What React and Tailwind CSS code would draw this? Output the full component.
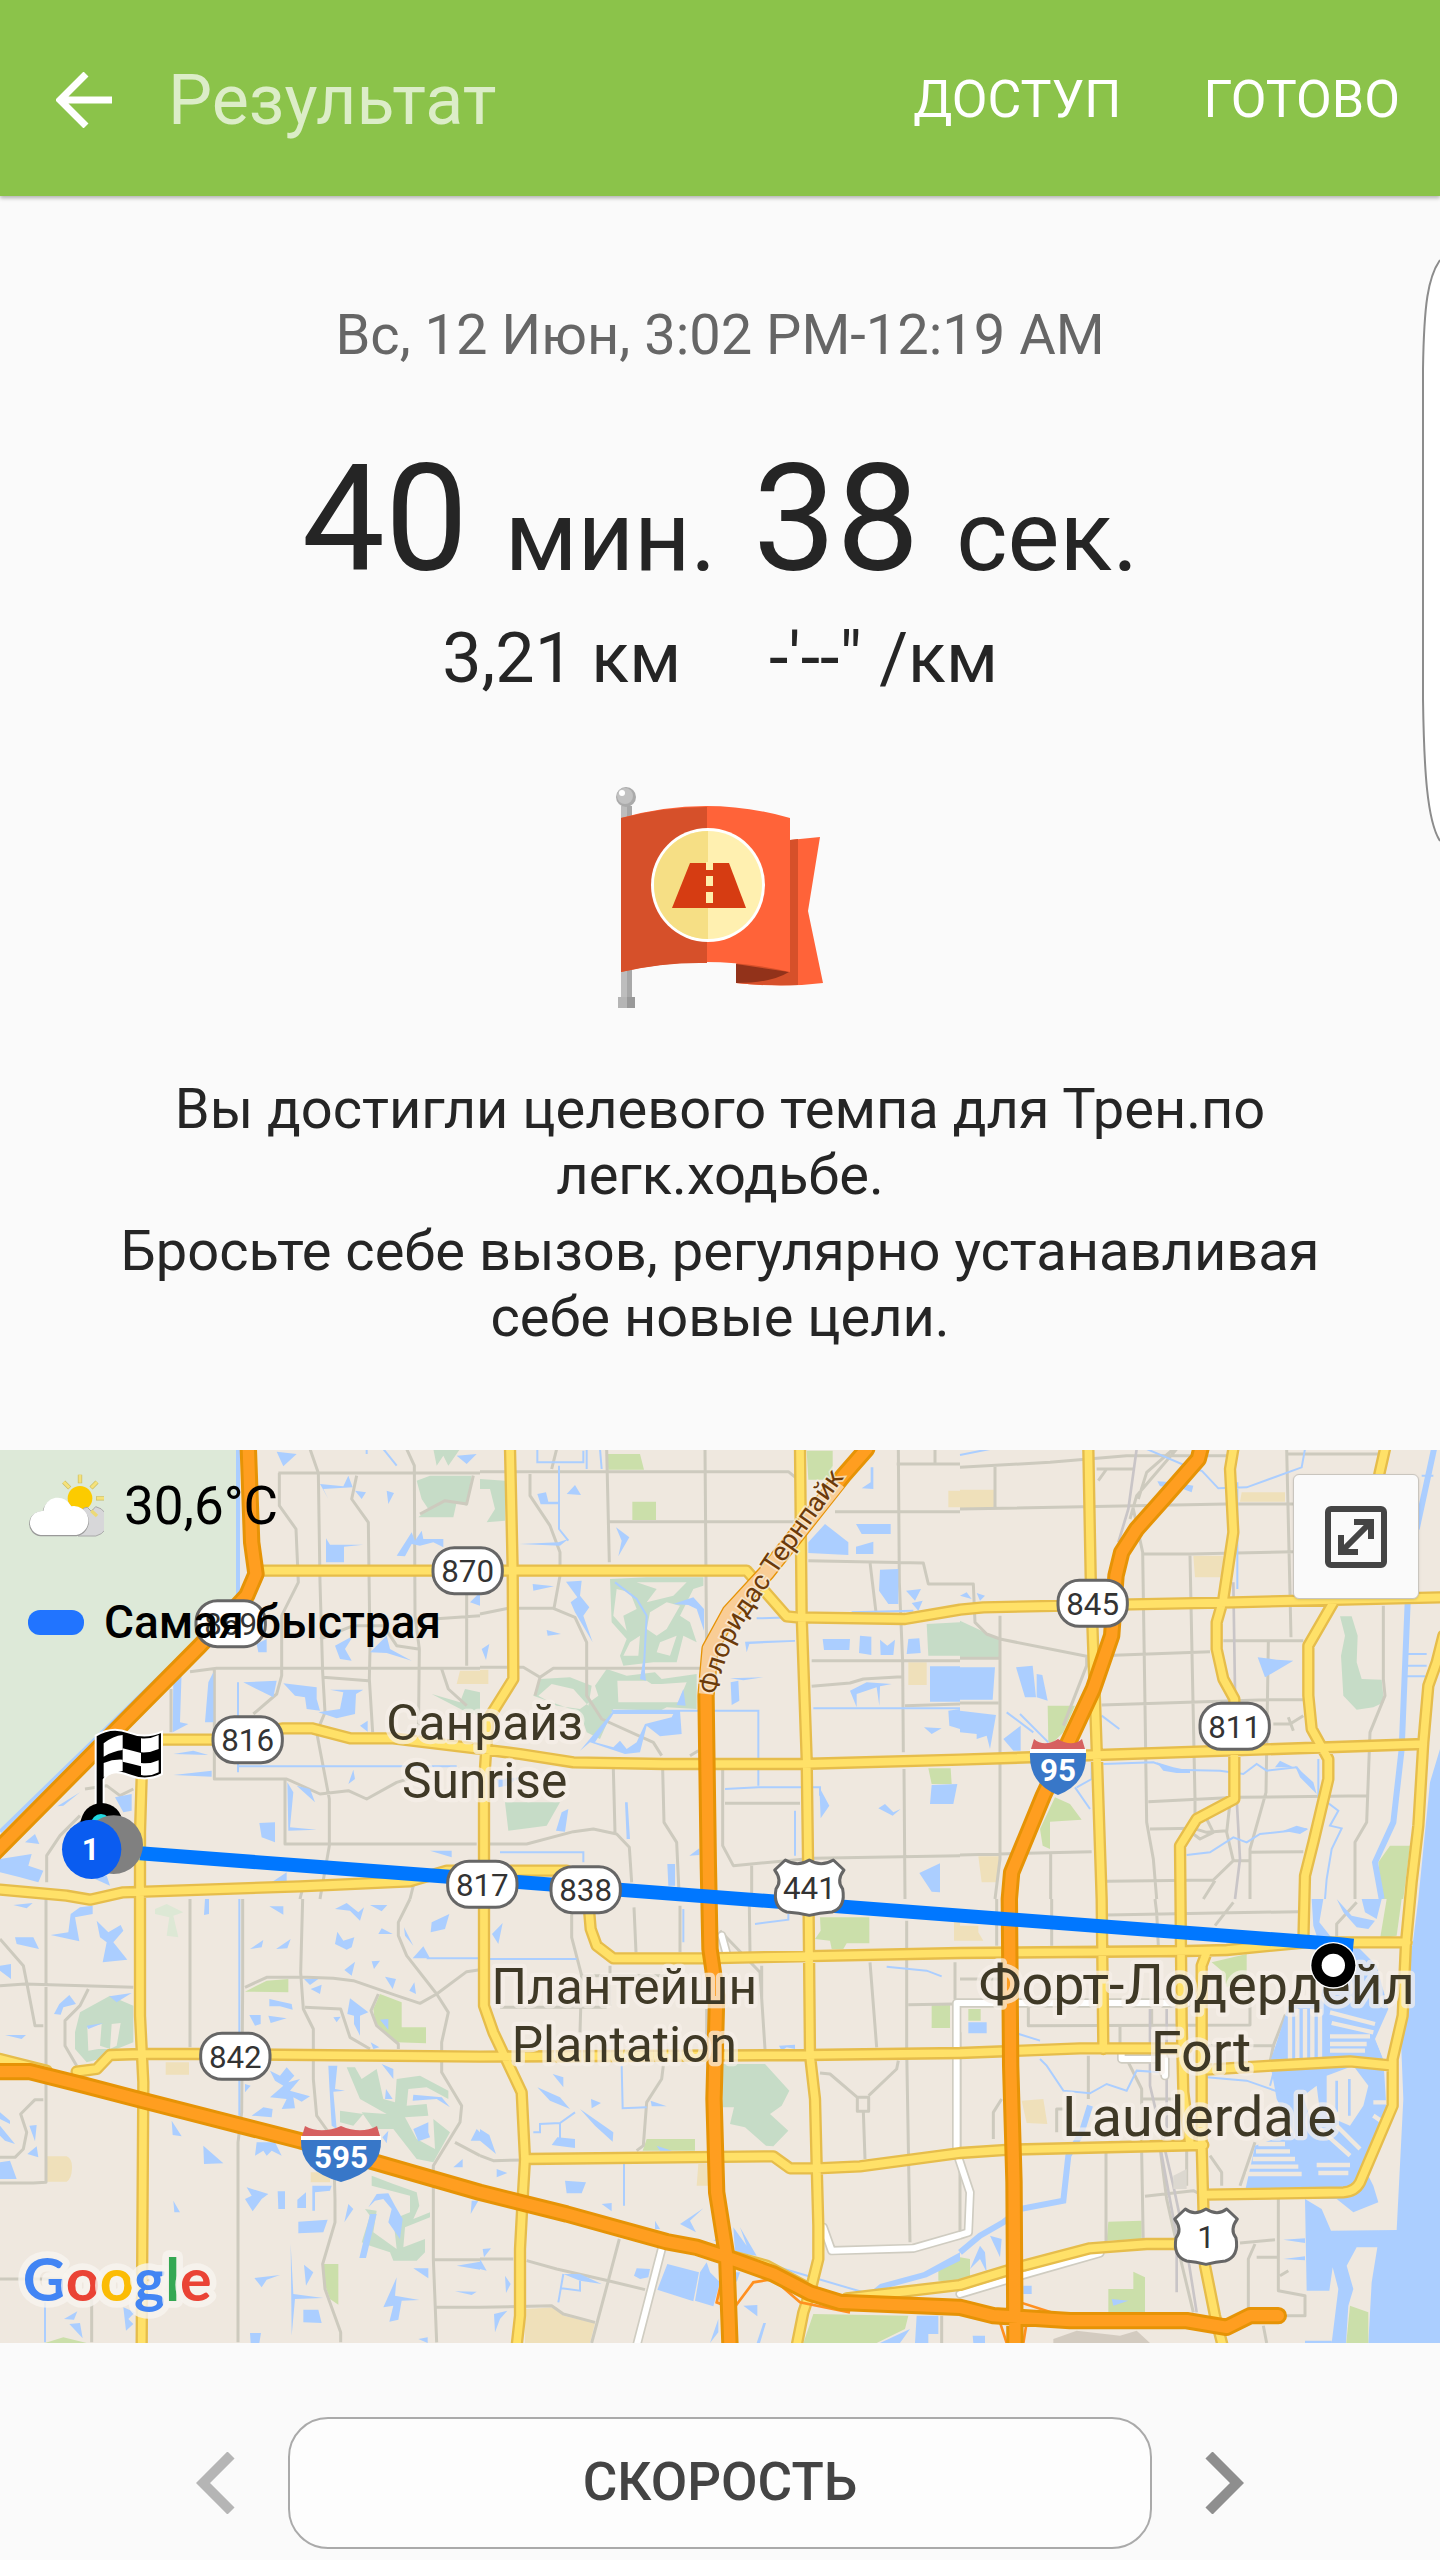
import React from 'react';

// Map drawing units: 4320 x 2679, cut in tiles of 1440 x 1350
const tiles = [
    {
        x: 0,
        y: 0,
        golf: 'M1250 95L1290 80H1415L1400 170L1370 160L1360 205H1255L1285 180L1265 150ZM1300 0H1380L1345 50L1330 20L1310 50ZM1295 735L1380 760L1395 720L1440 730V800L1400 790Z',
        sand: 'M1380 665H1440V705H1370Z',
        water: 'M830 8L890 15L850 52ZM960 105L1030 112L1045 80L1058 115L970 120L985 150ZM1065 125L1098 130L1085 150ZM1160 125L1182 132L1165 165ZM978 268L990 287L1090 287L1032 293V340H978ZM1190 320L1235 250L1245 275L1265 245L1270 270H1330V295L1300 280L1260 290L1235 285L1215 322ZM1370 20L1430 15L1400 45ZM520 690L545 665L540 820L565 825L518 850ZM615 820L625 700L640 670V820ZM730 700L830 695L820 745ZM850 703L950 715V750L960 785L920 780L915 745L885 740ZM955 790L1020 780L1030 730L990 722H1090L1068 735L1065 795L1010 808ZM1080 830L1103 815V848ZM520 915L580 905L625 918ZM520 978L635 965V983ZM172 1072L240 1030L190 1070ZM345 1045L395 1035V1085L370 1090ZM75 1180L105 1155L118 1185ZM0 1230L95 1215L85 1250L130 1265L115 1300L60 1285L0 1270ZM778 1122L825 1120V1180L785 1165ZM862 1000L880 1030L870 1135L950 1142L865 1145ZM890 1010L930 1020L945 1060ZM1045 1005L1060 962L1065 990ZM1005 590L1060 560L1035 600L1055 635L1020 630ZM1110 610L1160 560L1170 600L1235 635L1160 612ZM770 585L800 570V610H775ZM1290 1205H1355V1225ZM285 1290L320 1280L330 1310ZM815 1300L860 1270V1300ZM1410 460L1440 430V470Z',
        canal: 'M714 952H1370M714 700V970M1100 0V15M1150 0L1190 50',
        street: 'M835 72H1440M838 72V170L888 240L895 400L845 500V680L830 735L760 795M930 0L955 72L960 400L968 670L975 790L950 850L988 1050V1190L960 1350M1070 80L1055 150L1105 220L1110 600L1108 690L1118 850M1220 0L1243 50L1245 500L1258 600L1255 880M1400 380V650M570 668L650 658H1440M513 720V850M643 658V990H860L960 1035L1045 1025L1100 1050L1190 1000L1240 985M855 990V1185H1430M970 685L1105 695M1325 660L1345 720L1400 770M960 570L1060 530H1150L1190 590L1255 600M1260 195L1335 155L1400 165L1420 80M140 1300V1220L180 1160L240 1100M1245 1290L1230 1350M910 1310L900 1350M255 1020L320 1010L360 1040L400 1020M1300 510L1440 500',
    },
    {
        x: 1440,
        y: 0,
        golf: 'M0 90L75 95V215L20 220L45 180L30 120H0ZM390 390L500 385H670V410L640 420L600 500L630 520L650 580L610 560L590 640H520L430 650L420 620L440 570L395 520ZM410 420L400 500L440 545L430 500L470 480L450 430ZM470 400L530 420L500 460L580 440L620 400ZM510 490L560 460L600 470L560 540L530 560L500 540ZM450 580L480 560L475 620L430 620ZM540 580L590 560L570 620L530 610ZM160 740L180 690L270 685L335 710L325 770L280 720L215 705L175 740L230 770L300 780L355 740L345 710L380 660L440 680L525 670L545 690L650 675V780L560 775L540 785L400 780L360 870L320 850L300 790ZM412 695H500L515 705L545 705L620 700L595 760L415 760ZM75 1060H240L200 1130L85 1145ZM1340 525L1440 520V620H1345Z',
        green: 'M380 15H480L492 62H385ZM457 158H528V213H457ZM980 5H1058V92H985ZM1345 958H1412L1415 1005H1355Z',
        sand: 'M1285 640H1340V708H1285ZM1405 125H1440V175H1405ZM0 662H25V705H0Z',
        water: 'M172 135L198 130L205 158H238V166H182ZM260 135L285 108L303 138ZM408 235L448 265L415 322L425 275ZM118 285L235 280L265 270L240 290ZM158 405L222 412L160 425ZM200 543L243 555L203 560ZM258 398L305 395L300 440L328 475L310 500L338 580L285 490L272 460L292 445ZM5 600L28 585L18 633ZM580 465L640 445L672 480V545L650 480L625 468ZM985 280L1035 225L1105 280V318L985 312ZM1128 225H1232V255H1145ZM1128 293L1180 278V315H1128ZM1145 118L1172 100V55H1180V120ZM1200 362L1255 360V465H1225L1197 425ZM1278 425L1323 420L1305 455ZM1295 462L1328 455L1315 485ZM1028 570H1110L1108 603H1032ZM1140 560L1174 563V618L1137 612ZM1200 572L1222 590L1245 572L1240 618H1202ZM1285 570L1318 568L1322 612L1280 615ZM1350 652H1440V758H1350ZM1110 725L1160 700L1235 705L1200 712L1198 770L1190 715L1130 735V775ZM1405 785L1440 780V840L1408 830ZM1332 835L1385 838L1355 855ZM750 688L850 685L790 694ZM752 700L775 695L778 755L755 768ZM300 905L400 785H600L605 855L540 862L500 830L480 910L435 915L330 880ZM345 880L400 795H580L575 805L495 825L470 880L440 900L420 875L400 895ZM590 768L610 720L617 770ZM50 990L120 985L80 1010L55 1015ZM228 1145L245 1090L265 1080L255 1148ZM1355 1008L1432 1005L1420 1065H1350ZM1018 1015L1048 1070L1022 1108ZM1195 1078L1215 1065L1240 1090L1262 1080L1238 1100ZM1318 1272L1380 1243V1330L1355 1328ZM562 1245H585V1310H565ZM628 1220L658 1198V1218ZM435 1060H443L450 1170H440ZM795 578L945 573V578L808 585L800 610ZM480 690L490 630L498 695Z',
        canal: 'M172 0V40H310V5M237 50V240L265 275M320 0V60M360 0L365 60M395 785H835V1010M735 1020L835 1015H1020V1040M1000 778H1440M945 1085V1220M60 1210L310 1210V1240M405 400L470 450L500 500L490 690M1115 490L1300 485M830 508L940 505',
        street: 'M0 68H925L950 88M380 0L388 340M388 218H950M675 0L680 640M150 75V140L210 230L240 310V380L222 478M0 495L85 478H220L285 505L320 580V740L365 810L520 880L545 920M0 655H130L180 685L220 658H680M180 685L165 740M1255 0L1258 400L1268 640L1270 910M1250 45H1440M1365 0V45M1065 188H1440M985 335L1330 342L1345 405H1440M1170 340L1188 490M995 635H1440M995 712L1110 702L1150 690L1265 683M1275 770L1440 765M400 960L405 1150M548 960L552 1120L590 1180L598 1350M30 1185H140L280 1148L340 1140L410 1155L448 1195L455 1300M728 960V1190L760 1250L920 1235L1000 1228L1440 1220M735 1063H960M1272 960L1275 1350M815 1250V1350M630 920L655 905M230 0L215 60',
    },
    {
        x: 2880,
        y: 0,
        golf: 'M0 515L118 570V628H0ZM1140 502H1175L1193 560L1190 640L1205 690L1265 692L1272 760L1240 775L1190 782L1150 740L1143 620L1155 560Z',
        green: 'M263 770H345L310 850L280 880H265ZM285 1045L330 1065L365 1112L270 1118V1200L248 1190L240 1140ZM1290 1190H1350L1330 1350H1265L1255 1240Z',
        sand: 'M0 122H103V178H0ZM845 130H975V158H840ZM700 320H790V385H705ZM55 1222H118L112 1300H65Z',
        water: 'M0 655H105L98 752H0ZM168 655L218 650L228 745H195ZM230 675L247 678L263 755L230 745ZM0 785L108 798L90 900L80 860L50 870V855L0 850ZM130 870L182 830V905H160ZM893 625L950 632L1000 635L915 685ZM592 97L640 100L700 110L695 130L655 115L600 112ZM590 940L640 955L690 965V972H650L610 965ZM1005 950L1060 1000L1070 1035L1020 985ZM945 955L960 935L1000 955ZM970 1145L1010 1130L1045 1140L1020 1155ZM0 440L20 430L35 450ZM50 432L75 440L60 455ZM1440 900L1410 1000L1375 1350H1440Z',
        canal: 'M430 945L580 940L640 962L780 965L850 975L890 945L920 965L1010 955L1060 1020M1075 930V1040L1135 1085L1110 1130L1145 1138L1115 1200L1100 1290L1095 1350M680 1218L750 1210L820 1165L860 1180L900 1155L1040 1140M725 65L775 118L860 115L1025 55L1035 0M560 0L700 60L725 65M0 18L90 0M345 1015L390 1080M180 795L265 880M140 790L220 850M425 800L478 840M350 1015L395 990V940M832 100V420M1340 615H1400M1340 650H1400M1340 682H1395M1385 80H1420',
        river: 'M1343 460L1325 900L1300 1120L1245 1240L1265 1350M1422 0L1370 240',
        street: 'M0 55L270 40L500 20H800M105 45V180M0 180L800 165H1000M650 0L530 140L510 210M640 0L560 70L535 150M520 180L548 310L555 770L560 1120L580 1230L590 1350M550 315H690L1000 308M690 320L705 1050V1140M980 0L993 565M790 575H1030M120 570L380 622L750 608M120 500V1230L105 1350M0 405H40L45 520L80 555L120 570M0 628H120M0 762H115M380 622V650L310 830M425 768L920 752H1030M925 580L918 1030L870 1200V1350M565 1058L830 1045L1225 1040M1270 470V690L1275 740L1230 850L1220 1120L1185 1180V1350M570 1140L700 1138L740 1150L800 1145M740 1110L760 1150L720 1170L700 1155M0 1218L395 1208M272 1215V1350M440 1297L760 1293L820 1235H870M870 1210L1030 1208M820 1235L800 1150L810 1060M730 1350L765 1295M940 825H990L1030 800M985 805L1000 845M980 15H1280M410 60H520M440 60L415 95',
        rail: 'M530 0L505 180L475 280M820 400L830 1050L840 1230L825 1350',
    },
    {
        x: 0,
        y: 1350,
        golf: 'M225 400L240 340L330 290L400 320V430L350 450L300 480L260 490L225 450ZM262 385L305 375L300 440L330 450L335 375L362 372L350 440L330 450L295 450L265 455ZM1040 505H1065L1085 540L1130 510L1150 600L1185 610L1190 540L1260 530L1345 575V600L1280 565L1225 570L1220 620L1280 615L1285 650L1215 655L1250 720L1305 750L1300 660L1350 700L1300 790L1250 780L1180 690L1120 690L1085 640L1160 645L1080 600ZM1020 635L1090 645L1060 680L1020 670ZM1115 830L1180 855L1250 880L1258 920L1240 960L1290 940V955L1215 985L1210 1045L1275 1020V1060L1250 1085H1180L1170 1060L1110 1040L1085 1030L1110 950L1095 930L1130 935L1120 1000L1190 1050L1180 960L1230 940V890L1115 860Z',
        green: 'M735 278L800 245L865 240V280ZM1140 285L1205 310V385H1278V433L1190 430L1125 370L1120 330ZM970 1095H1015V1217L990 1200L972 1150ZM135 1332L190 1315L260 1332Z',
        sand: 'M497 490H567V527H497ZM140 772H200Q218 780 216 810T200 848H140ZM932 820H990V850H932Z',
        water: 'M40 18L98 12L80 28ZM212 45L240 25L278 20V45L225 55L238 127L152 108L205 100ZM290 65L325 100L362 78L370 95L340 130L382 182L308 190L320 130L300 115ZM45 115H100L117 150L50 135ZM615 0H627V45L612 48ZM808 22H850V47ZM750 150L790 123L785 145ZM828 150L872 120L862 148ZM1005 30L1040 12L1075 40L1092 25L1080 65L1050 35ZM1110 18H1162L1145 37ZM1012 98L1030 125L1063 115L1055 145L1040 152L1005 135ZM1135 105L1145 88L1178 105ZM1212 85L1240 140L1215 110ZM1295 70L1348 45L1335 90L1292 100ZM1238 178L1270 142L1290 178ZM1033 213L1065 188L1055 230ZM1115 187L1140 185L1122 210ZM1155 233L1188 240L1178 270ZM1228 275L1243 250L1248 285ZM932 270L965 257L960 285ZM912 240H955L930 258ZM0 200L33 195V240L0 215ZM162 345L178 315L208 288L228 315L190 325L182 347ZM808 300L875 315L878 332L840 322H808ZM748 348H782V375L765 380ZM805 350L860 358L812 372ZM1050 298L1105 340L1080 350V410L1062 375V350L1042 345ZM1000 355L1022 353L1010 370ZM1140 362L1165 360V393ZM15 408L78 408L65 420ZM1112 430L1138 445L1120 450ZM328 292L395 282L350 310ZM260 380L310 372L265 390ZM810 515L840 530L860 505L883 530L865 550L900 540L870 575L930 592L905 608L880 595L885 628L845 630L860 600L810 595L850 560L825 545ZM985 500H1012L1005 570L1035 575L1000 578L1010 690L995 680L988 560ZM1145 495L1180 510V540ZM1158 570L1178 600L1155 600ZM1240 587L1325 595L1350 625L1310 600L1238 605ZM1240 690L1285 670V700L1290 715L1255 727ZM1412 725L1430 690L1440 700V725ZM1360 805L1388 780V805ZM1147 715L1165 695L1160 733ZM0 640L30 665V675L0 660ZM0 680L45 735L15 725L0 710ZM88 680L110 678L105 727ZM82 765L110 742L115 775ZM0 790L30 785L50 840H0ZM515 665L545 712L518 708ZM610 740L670 793L612 795ZM765 770L770 730H825L845 770L815 755L800 770L790 755ZM755 650L790 625L818 630L815 655ZM735 555L752 560L735 580ZM740 865L805 885L785 900L758 937L735 900L755 890ZM833 877H855V930H835ZM892 902L918 880V927H892ZM937 860H995L990 875L945 880V935H937ZM895 968L983 962L970 1000L895 1003ZM1033 970L1045 915L1060 930ZM1105 925L1130 885L1165 883L1185 920L1208 960L1200 1020L1165 970L1175 930L1150 900L1125 905ZM1110 945H1130L1098 1077H1078ZM520 905L540 940H523ZM763 1137L840 1128L800 1142L785 1165ZM872 1035L880 1185L970 1197L885 1200L875 1310ZM912 1097L940 1120L918 1160ZM910 1232H955L965 1272L910 1270ZM750 1302H783L778 1332H752ZM1150 1225L1190 1135L1185 1190L1258 1203L1205 1205L1195 1262L1168 1268L1180 1220ZM1240 1108H1285V1138ZM1370 1100L1440 1088V1112ZM1365 1177L1430 1178L1415 1188ZM192 1260L232 1237L222 1262ZM208 1275L240 1272L248 1318ZM370 1225L405 1240L385 1260L400 1275L378 1295ZM1412 945L1415 905L1435 905ZM1255 1320L1283 1315V1332Z',
        canal: 'M718 0V650M1280 178H1440M135 1210V1330',
        street: 'M138 0V850L100 852H0M0 120L70 200L80 250L105 380H130M0 260L75 255L400 265M265 270L240 320L195 365V440L230 500M130 602H105L62 645L80 700L70 750L45 775H0M570 0V445M728 0V270L725 640L714 730V1330M908 0L902 220L910 330L940 390V540L950 650L1000 720L1005 900V970L968 1095L975 1170L1022 1300V1330M735 265L800 235H920L1000 238L1060 245L1190 290L1260 313L1310 285L1400 218L1440 212M1230 0L1195 70V110L1220 170L1310 285L1345 340L1325 430V520L1385 620L1380 670L1300 800V1080L1310 1330M1300 1082H1440M1310 1225H1440M915 325L1022 330L1050 415L1110 450M1135 285L1113 335L1130 380L1195 435V450M1365 730L1440 770M0 1140H220M275 1200V1330',
    },
    {
        x: 1440,
        y: 1350,
        golf: 'M728 495H855L928 575L905 620L870 645L925 695L880 742L858 740L795 685L750 675L762 625H728Z',
        green: 'M1020 55H1168V133H1100L1090 150H1055L1050 125L1005 120L1022 95ZM1355 318H1410V387H1355ZM500 720H645V755H488ZM1440 1070L1375 1105V1145L1440 1150ZM1000 1245L1285 1250L1275 1290L1190 1332H970Z',
        sand: 'M135 1230L230 1225L250 1250L345 1272L330 1332H135ZM1422 55H1440V125H1422ZM655 795H685V860H650Z',
        water: 'M36 105L68 72L55 135ZM218 525L250 535V565ZM172 565L240 595L270 630L210 605ZM333 600L363 612L335 628ZM512 605L560 622H515ZM300 630L400 700L398 728L345 680ZM215 738L232 715L285 720V747ZM0 690L28 708L48 765L0 725ZM50 810L82 822L50 835ZM255 845L318 850L305 883H260ZM365 915L395 912V937ZM525 965L540 990H525ZM600 975L670 928L630 965L648 1000ZM700 1025L740 1000V1030ZM760 985L800 1040L780 985L830 1070L765 1060ZM470 1108L510 1110L505 1135L480 1140L462 1130ZM562 1095L657 1120L640 1207L532 1172ZM660 1120L680 1090L690 1120L720 1150L700 1222L645 1205ZM760 1120H780L770 1150ZM790 1220L832 1218V1252ZM850 1272H858L840 1332H830ZM690 1332L715 1260V1300ZM1440 1060L1330 1120L1200 1155L1170 1180L1210 1170L1340 1135L1440 1085ZM8 1050L33 1048L12 1075ZM0 1080L20 1115L0 1110ZM75 1130L92 1155L78 1182ZM42 1245L82 1235L60 1260L45 1300ZM250 1125H300L365 1155L300 1145ZM1310 1250H1375V1305H1345V1332H1305ZM1200 1332L1290 1290L1260 1332ZM897 440L945 437V450L920 445L905 455ZM530 740L575 755H540Z',
        canal: 'M425 500L428 628L500 625M432 795V920M825 75L925 62V45M1220 203L1340 215L1385 232M610 30V130M160 700H180V675L240 672L285 640M240 672V720M880 1100L1150 1180M250 1125L235 1210M300 1145V1175L245 1168M0 180H290',
        street: 'M275 40V115L305 230L300 400M462 25L468 160M600 20V160M720 95L840 220L855 450M845 200V300M808 20L810 160M1280 65V450L1290 1030M1170 190L1190 445M0 770L40 785L135 783M550 500L545 540L500 610L490 740L470 755M1020 522L1050 525L1132 595H1166V637H1132V595M1166 590L1250 510L1255 485M1150 637L1155 780M1285 317L1420 315M140 1085L230 1110L385 1145L495 1172M418 1020L385 1145L335 1332M0 1080H100M0 1225L215 1220L250 1245L345 1270M1385 1250V1332M1425 190V300M390 200V320M300 230H560M60 325H380M680 330V450',
    },
    {
        x: 2880,
        y: 1350,
        green: 'M755 190L860 165V240L800 265L785 215ZM445 968L545 965V1020L440 1025ZM520 1118L555 1135V1240H445V1170H520ZM0 1075L30 1080V1135L0 1140ZM25 330H62V365H25Z',
        sand: 'M0 80H55V100L70 125H0ZM185 605L250 600L262 675L200 672Z',
        water: 'M1375 0H1440V1332H1225L1235 1150L1252 1045H1190L1160 1100L1180 1170L1165 1220L1158 1332H1115L1135 1170L1118 1105L1108 1175H1040L1035 900L1085 930L1113 995L1310 993L1330 600L1320 350L1360 120ZM1055 0H1090L1078 70L1110 110L1200 150L1250 200L1285 330L1245 420L1270 480L1280 640L1260 740L1210 800L1240 860L1255 910L1180 940L1130 900H850L885 740L1000 700L950 600L930 490L960 400L985 320L1080 310L1100 200L1060 80ZM1130 0L1175 50L1245 65L1225 90L1190 85L1150 40ZM1205 0H1265L1250 60L1215 40ZM25 370H80V403H25ZM30 1110L60 1040L75 1060L80 1120L60 1080ZM90 1010L125 1020L120 1075ZM190 1160H215V1185H190ZM455 1200L505 1205L460 1220ZM38 1310H75V1332H40ZM970 1022L1035 1018V1032ZM970 1080L1035 1072V1084ZM1035 1325H1115V1332H1035Z',
        river: 'M390 620L365 700L325 770L310 905L180 930L130 970L60 1010L0 1060',
        canal: 'M240 480L260 500L310 575L390 583L440 555L500 575L530 515L600 520M740 535L860 545L960 580L1000 600M160 400L240 425M930 560L960 450',
        street: 'M275 0V140M110 0V140M440 48L1015 38M585 0L590 40L595 140M765 80L820 10M100 720V640L125 600M205 325V380L870 378V240M0 240H120M385 470V600M310 630H290V700M438 760V1030M545 760L550 1040M555 892L700 875L720 885M600 745L620 900L640 990L700 1240M680 560V860M480 380V440L545 570V750M575 330V380M545 600H640M955 900V1175L1035 1190V1250H970M890 1075H955M840 1032L945 1022M885 1035L865 1080V1230M750 770L785 820V860M885 730L840 860M910 1280L920 1332M1000 330L975 350L940 440L930 490M700 440H945M1130 120V75L1190 10M960 1130L985 1115M0 400V1000',
        rail: 'M620 330V700L600 740L650 1010V1180M570 330V560L640 860L680 1050L710 1240',
    },
];

const reserve = 'M0 0H712V442L600 560L0 1142Z';

const fingers =
    'M3870 1680V1835M3892 1680V1830M3915 1680V1830M3937 1680V1830M3960 1680V1830M3990 1690L4125 1725M3995 1722L4120 1750M3990 1762H4110M3990 1785H4100M3990 1805H4095M3775 2085H3855M3768 2107H3870M3758 2130H3885M3748 2153H3895M3738 2175H3905M3950 2148H4050M3955 2172H4045M3960 2040L4050 2120M4010 2030L4080 2100M4120 2000L4150 2020M4120 1960H4170';

const island = 'M3980 1880L4060 1850L4105 1910L4090 1970L4050 2030L3980 2000ZM3910 1940L3950 1910L3960 1990L3930 2010Z';

const beach = 'M4200 1960L4205 1600L4180 1560V1700L4130 1780Z';

const yellowRoads =
    'M790 365H2240L2360 502L2390 505L2715 510L2880 482L2950 475L3700 460L4320 445' +
    'M1530 0L1538 360L1540 690L1465 810L1452 1000V1670L1480 1750L1565 1930L1575 2130L1568 2250L1560 2400V2600L1550 2690' +
    'M480 872H640L850 838H935L1050 868H1180L1440 900L1560 915L1720 940L1990 945H2400L2880 932L3830 900L4270 885' +
    'M2400 0L2405 500L2420 930L2425 1300L2430 1820L2445 1950L2450 2150L2455 2330V2430L2430 2530L2410 2590L2390 2690' +
    'M425 985L420 1150V1700L430 1900L425 2690' +
    'M0 1322L200 1340L270 1352L370 1330L900 1312L1230 1297L1340 1265H1700L1760 1300L1772 1440L1790 1490L1840 1528H2120L2880 1512L3560 1506L3680 1503L3920 1480H4220' +
    'M230 1868L290 1860L330 1818L420 1815H600L1440 1823L2420 1818L2880 1812L3240 1798H3560' +
    'M0 1830L140 1865' +
    'M1580 2130L2320 2122L2370 2158H2450L2580 2152L2880 2112L3030 2102L3610 2088' +
    'M3265 0L3272 380L3290 900L3305 1350L3310 1800' +
    'M3700 0L3690 60L3700 250L3670 450L3650 520V600L3670 690L3703 750V1050L3590 1110L3540 1190L3545 1720L3550 1930L3570 2085' +
    'M3620 1510L3605 1550V2090L3615 2450L3645 2600L3668 2690' +
    'M4000 460L3925 590V740L3935 840L3985 930V990L3940 1180L3915 1280L3910 1480' +
    'M4155 0L4138 75' +
    'M4330 560L4310 640L4285 710L4270 880L4255 1130L4235 1300L4218 1480L4208 1700L4178 1830V1970L4080 2200Q4065 2228 4030 2230L3620 2237' +
    'M3620 1862L3780 1852L4050 1837L4178 1850' +
    'M2540 2548L2880 2508L3070 2450L3270 2398L3440 2385H3560' +
    'M2190 2420L2300 2450L2430 2520';

const whiteRoads =
    'M2470 2335L2495 2405L2740 2398L2880 2358L2905 2350L2910 2230L2870 2110V1662H3560M1985 2400L1910 2690M2165 1460L2180 1515M3365 1815V1830H3495V1880M3490 1810V1870M2880 2535L3080 2475L3300 2412';

const orangeRoads =
    'M745 0L755 280L768 375L740 440L600 590L-20 1215' +
    'M-20 1868H90L250 1908L430 1955L900 2075L1440 2230L1700 2295L2000 2378L2090 2395L2190 2428L2320 2475L2430 2532L2520 2560L2880 2575L2980 2600L3210 2615H3560L3680 2635L3750 2600H3835' +
    'M2600 0L2530 80L2300 370L2190 490L2130 600L2118 740L2125 1250L2130 1500L2150 1640L2142 1950L2150 2230L2180 2420L2190 2690' +
    'M3605 -10L3595 30L3490 150L3410 240L3365 310L3348 380L3335 560L3280 720L3210 870L3130 1040L3035 1270L3028 1350L3032 1850L3042 2200L3045 2690';

const ovals = [
    { n: '870', x: 1403, y: 365 },
    { n: '869', x: 692, y: 524 },
    { n: '845', x: 3278, y: 463 },
    { n: '811', x: 3704, y: 832 },
    { n: '816', x: 743, y: 872 },
    { n: '817', x: 1447, y: 1306 },
    { n: '838', x: 1757, y: 1322 },
    { n: '842', x: 706, y: 1822 },
];

const cities = [
    { name: 'Санрайз', x: 1454, y: 873, size: 149 },
    { name: 'Sunrise', x: 1454, y: 1048, size: 149 },
    { name: 'Плантейшн', x: 1873, y: 1665, size: 149 },
    { name: 'Plantation', x: 1873, y: 1838, size: 149 },
    { name: 'Форт-Лодердейл', x: 3590, y: 1665, size: 167 },
    { name: 'Fort', x: 3603, y: 1865, size: 167 },
    { name: 'Lauderdale', x: 3598, y: 2062, size: 167 },
];

function Road({ d, casing, fill, width, inner }) {
    return (
        <g fill="none" strokeLinejoin="round" strokeLinecap="round">
            <path d={d} stroke={casing} strokeWidth={width} />
            <path d={d} stroke={fill} strokeWidth={inner} />
        </g>
    );
}

function UsShield({ x, y, n, wide }) {
    const w = wide ? 104 : 94;
    return (
        <g transform={`translate(${x} ${y})`}>
            <path
                d={`M${-w} -52L${-w + 32} -82Q-35 -60 0 -82Q35 -60 ${w - 32} -82L${w} -52Q${w - 24} -20 ${w - 4} 5Q${w + 6} 60 ${w - 36} 74Q30 76 0 84Q-30 76 ${-w + 36} 74Q${-w - 6} 60 ${-w + 4} 5Q${-w + 24} -20 ${-w} -52Z`}
                fill="#fff"
                stroke="#666"
                strokeWidth="9"
                strokeLinejoin="round"
            />
            <text y="36" fontSize="94" textAnchor="middle" fill="#333">{n}</text>
        </g>
    );
}

function Interstate({ x, y, n, w }) {
    return (
        <g transform={`translate(${x} ${y})`}>
            <path d={`M${-w + 12} -84Q${-w / 2} -58 0 -84Q${w / 2} -58 ${w - 12} -84Q${w - 6} -64 ${w} -44H${-w}Q${-w + 6} -64 ${-w + 12} -84Z`} fill="#d66060" />
            <path d={`M${-w} -54H${w}V-40H${-w}Z`} fill="#fff" />
            <path d={`M${-w} -42H${w}Q${w + 4} 50 0 84Q${-w - 4} 50 ${-w} -42Z`} fill="#3877c8" />
            <text y="42" fontSize="94" fontWeight="700" textAnchor="middle" fill="#fff">{n}</text>
        </g>
    );
}

function FinishFlag() {
    return (
        <g>
            <path d="M287 860Q335 830 385 850T486 848V975Q440 1000 385 978T311 992V1070H287Z" fill="#000" stroke="#fff" strokeWidth="6" />
            <g fill="#fff">
                <path d="M311 883Q340 860 368 858V903Q340 906 311 923Z" />
                <path d="M368 898Q395 905 423 912V952Q395 944 368 938Z" />
                <path d="M423 868Q450 871 476 858V900Q450 912 423 910Z" />
                <path d="M311 942Q340 930 368 932V966Q340 970 311 985Z" />
                <path d="M423 942Q450 946 476 934V970Q450 984 423 978Z" />
            </g>
            <circle cx="295" cy="1187" r="90" fill="#808080" />
            <path d="M240 1125Q250 1065 305 1062Q360 1065 370 1125L340 1180H260Z" fill="#000" />
            <circle cx="303" cy="1125" r="30" fill="#20d8e0" />
            <circle cx="341" cy="1187" r="88" fill="#808080" />
            <circle cx="275" cy="1201" r="89" fill="#0a5cf0" />
            <text x="272" y="1232" fontSize="92" fontWeight="700" textAnchor="middle" fill="#fff">1</text>
        </g>
    );
}

function RouteMap() {
    return (
        <svg viewBox="0 3 4320 2679" className="block w-full" style={{ fontFamily: 'Roboto, sans-serif' }}>
            <rect width="4320" height="2690" fill="#efe8df" />
            <path d={reserve} fill="#dde9d8" />
            <path d="M714 0V442L600 565L0 1148" fill="none" stroke="#abceff" strokeWidth="12" />
            {tiles.map((t) => (
                <g key={`${t.x}-${t.y}`} transform={`translate(${t.x} ${t.y})`} fillRule="evenodd">
                    <path d={t.golf} fill="#c6dcc7" />
                    <path d={t.green} fill="#cbdfaa" />
                    <path d={t.sand} fill="#efe0ba" />
                    <path d={t.street} fill="none" stroke="#cdcabe" strokeWidth="9" strokeLinejoin="round" />
                    <path d={t.rail} fill="none" stroke="#c9c5c7" strokeWidth="8" strokeLinejoin="round" />
                    <path d={t.water} fill="#abceff" />
                    <path d={t.canal} fill="none" stroke="#abceff" strokeWidth="6" />
                    <path d={t.river} fill="none" stroke="#abceff" strokeWidth="18" />
                </g>
            ))}
            <path d="M465 1380L500 1365L550 1390L520 1400L535 1465L500 1460L508 1405L465 1395Z" fill="#dde8d5" />
            <path d="M3160 2670L3230 2645L3360 2660L3410 2645L3450 2682H3160Z" fill="#d3cbc0" />
            <path d="M3520 2180L3560 2160V2220H3520Z" fill="#dcd8d0" />
            <path d={beach} fill="#efe8df" />
            <path d={island} fill="#efe8df" />
            <path d={fingers} fill="none" stroke="#efe8df" strokeWidth="13" />
            <path d="M4010 1895V1990M4048 1890V2000" stroke="#abceff" strokeWidth="8" />
            <path d="M4050 2570L4105 2590V2690H4038Z" fill="#cbdfaa" />
            <path d="M4160 1350H4205L4190 1460L4140 1470Z" fill="#cbdfaa" />

            <Road d={whiteRoads} casing="#cfccc1" fill="#fff" width={28} inner={18} />
            <Road d={yellowRoads} casing="#e6bd4b" fill="#ffe168" width={37} inner={23} />
            <path d="M2180 2430L2150 2560L2200 2580L2260 2500L2320 2490L2400 2560L2550 2590" fill="none" stroke="#ff9020" strokeWidth="8" />
            <path d="M3000 2590L3060 2560L3200 2605M3000 2620L3020 2682M3080 2620L3070 2682" fill="none" stroke="#ff9020" strokeWidth="8" />
            <Road d={orangeRoads} casing="#e69306" fill="#ff9e20" width={52} inner={34} />
            <path d="M2515 100L2300 370L2190 490L2130 600L2118 735" fill="none" stroke="#f9cd96" strokeWidth="44" />

            <path d="M420 1213L4020 1486L4060 1490" fill="none" stroke="#0077ff" strokeWidth="42" />

            <path id="turnpike" d="M2152 738C2165 650 2200 560 2265 470L2345 350L2600 -10" fill="none" />
            <text fontSize="81" fill="#6b3a0a" stroke="#f7efe2" strokeWidth="10" strokeOpacity="0.7" paintOrder="stroke">
                <textPath href="#turnpike">Флоридас Тернпайк</textPath>
            </text>

            {ovals.map((o) => (
                <g key={o.n}>
                    <rect x={o.x - 104} y={o.y - 69} width="208" height="138" rx="64" fill="#fff" stroke="#666" strokeWidth="9" />
                    <text x={o.x} y={o.y + 34} fontSize="94" textAnchor="middle" fill="#333">{o.n}</text>
                </g>
            ))}
            <UsShield x={2428} y={1315} n="441" wide />
            <UsShield x={3618} y={2362} n="1" />
            <Interstate x={3174} y={954} n="95" w={84} />
            <Interstate x={1023} y={2115} n="595" w={120} />

            {cities.map((c) => (
                <text
                    key={c.name}
                    x={c.x}
                    y={c.y}
                    fontSize={c.size}
                    textAnchor="middle"
                    fill="#3f3926"
                    stroke="#f6f0e8"
                    strokeWidth="26"
                    strokeOpacity="0.7"
                    strokeLinejoin="round"
                    paintOrder="stroke"
                >
                    {c.name}
                </text>
            ))}

            <circle cx="4000" cy="1549" r="70" fill="#fff" />
            <circle cx="4000" cy="1549" r="66" fill="#000" />
            <circle cx="4000" cy="1549" r="35" fill="#fff" />
            <FinishFlag />

            <text
                x="68"
                y="2555"
                fontSize="178"
                fontWeight="700"
                stroke="#f8f4ef"
                strokeWidth="40"
                strokeOpacity="0.8"
                strokeLinejoin="round"
                paintOrder="stroke"
                style={{ fontFamily: 'Lato, sans-serif' }}
            >
                <tspan fill="#4285f4">G</tspan>
                <tspan fill="#ea4335">o</tspan>
                <tspan fill="#fbbc05">o</tspan>
                <tspan fill="#4285f4">g</tspan>
                <tspan fill="#34a853">l</tspan>
                <tspan fill="#ea4335">e</tspan>
            </text>
        </svg>
    );
}

function WeatherIcon() {
    return (
        <svg viewBox="0 0 228 192" className="h-16 w-[76px]">
            <g stroke="#c9bb62" strokeWidth="13">
                <path d="M156 2V28M107 24L125 42M207 24L189 42M230 73H204M190 110L207 126" />
            </g>
            <g stroke="#f5e27a" strokeWidth="9">
                <path d="M156 2V26M107 24L124 41M207 24L190 41M228 73H206M191 111L206 125" />
            </g>
            <circle cx="156" cy="73" r="37" fill="#fccb00" />
            <path d="M150 186H186A37 37 0 0 0 203 98L190 112L178 100Q160 100 150 130Z" fill="#d7d7d9" stroke="#a9a9a9" strokeWidth="3" />
            <path d="M190 110L207 126" stroke="#ecd976" strokeWidth="10" />
            <path d="M38 187A34 34 0 0 1 44 112A46 46 0 0 1 130 98A45 45 0 0 1 145 187Z" fill="#9a9a9a" />
            <path d="M38 183A34 34 0 0 1 46 111A44 44 0 0 1 130 97A43 43 0 0 1 145 183Z" fill="#fff" />
        </svg>
    );
}

function GoalFlag() {
    return (
        <svg viewBox="0 0 208 222" className="h-[222px] w-[208px]">
            <path d="M5 20H16V222H5Z" fill="#a8a8a8" />
            <path d="M5 20H11V222H5Z" fill="#bdbdbd" />
            <path d="M2 211H19V222H2Z" fill="#999" />
            <path d="M2 211H11V222H2Z" fill="#b5b5b5" />
            <circle cx="10" cy="11" r="10" fill="#aaa" />
            <circle cx="9" cy="10" r="8" fill="#c2c2c2" />
            <circle cx="6" cy="7" r="3" fill="#fff" />
            <path d="M174 54L204 51L192 125L207 197Q165 202 120 197V178L174 180Z" fill="#ff6339" />
            <path d="M174 54L182 53V199Q150 200 120 197V178Z" fill="#d6502a" />
            <path d="M120 178L173 186Q155 197 120 197Z" fill="#92321a" />
            <path d="M5 32Q90 8 174 32V186Q90 166 5 186Z" fill="#ff6339" />
            <path d="M5 32Q48 21 91 21V177Q48 176 5 186Z" fill="#d6502a" />
            <circle cx="92" cy="99" r="57" fill="#fff" />
            <circle cx="92" cy="99" r="54" fill="#fff0b0" />
            <path d="M92 45A54 54 0 0 0 92 153Z" fill="#f6df85" />
            <path d="M74 77H113L130 122H56Z" fill="#d63c12" />
            <path d="M90 76H97V84H90ZM90 90H97V100H90ZM90 106H97V117H90Z" fill="#ffefab" />
        </svg>
    );
}

function App() {
    return (
        <div className="relative min-h-screen overflow-x-hidden bg-[#fafafa] font-['Roboto',sans-serif] text-[#252525]">
            <header className="flex h-[196px] items-center bg-[#8bc34a] pt-1 pr-10 pl-14 text-white shadow-[0_2px_4px_rgba(0,0,0,0.3)]">
                <button type="button" aria-label="Назад" className="mr-14">
                    <svg viewBox="0 0 56 56" className="h-14 w-14" fill="none" stroke="currentColor" strokeWidth="7">
                        <path d="M30 2L4 28L30 54M4 28H56" />
                    </svg>
                </button>
                <h1 className="flex-1 text-[70px] leading-[84px] text-[#dcedc8]">Результат</h1>
                <nav className="flex gap-[82px] text-[52px] leading-[66px]">
                    <button type="button">ДОСТУП</button>
                    <button type="button">ГОТОВО</button>
                </nav>
            </header>

            <svg viewBox="0 0 18 584" className="absolute top-[259px] right-0 h-[584px] w-[18px]">
                <path d="M18 1C6 18 2 45 1 110V440C2 510 5 562 18 582" fill="#fff" stroke="#8c8c8c" strokeWidth="2" />
            </svg>

            <section className="flex flex-col items-center px-25 pt-[106px] pb-25 text-center">
                <p className="text-[56px] leading-[66px] text-[#666]">Вс, 12 Июн, 3:02 PM-12:19 AM</p>
                <p className="mt-18 text-[148px] leading-[160px]">
                    40 <span className="text-[98px] leading-none">мин.</span> 38 <span className="text-[98px] leading-none">сек.</span>
                </p>
                <div className="mt-4 flex gap-[88px] text-[70px] leading-[84px]">
                    <span>3,21 км</span>
                    <span>-'--" /км</span>
                </div>
                <div className="mt-[86px]">
                    <GoalFlag />
                </div>
                <p className="mt-17 text-[56px] leading-[66px]">Вы достигли целевого темпа для Трен.по легк.ходьбе.</p>
                <p className="mt-[10px] text-[56px] leading-[66px]">Бросьте себе вызов, регулярно устанавливая себе новые цели.</p>
            </section>

            <section className="relative">
                <RouteMap />
                <div className="absolute top-6 left-7 text-black">
                    <div className="flex items-center gap-5">
                        <WeatherIcon />
                        <span className="text-[53px] leading-[64px]">30,6°C</span>
                    </div>
                    <div className="mt-14 flex items-center gap-5">
                        <span className="h-[25px] w-14 rounded-xl bg-[#2174ff]"></span>
                        <span className="text-[46px] leading-[56px] font-medium">Самая быстрая</span>
                    </div>
                </div>
                <button
                    type="button"
                    aria-label="Развернуть карту"
                    className="absolute top-6 right-[21px] flex h-[125px] w-[126px] items-center justify-center rounded-md border border-[#c9c5be] bg-[#fafafa] shadow-sm"
                >
                    <svg viewBox="0 0 62 62" className="h-[62px] w-[62px]" fill="none" stroke="#444" strokeWidth="6">
                        <rect x="3" y="3" width="56" height="56" rx="3" />
                        <path d="M29 16H46V33M46 16L16 46M16 29V46H33" />
                    </svg>
                </button>
            </section>

            <div className="flex items-center justify-center gap-[52px] pt-[74px] pb-[10px]">
                <button type="button" aria-label="Предыдущий" className="text-[#b5b5b5]">
                    <svg viewBox="0 0 40 62" className="h-[62px] w-10" fill="none" stroke="currentColor" strokeWidth="10">
                        <path d="M35 3L7 31L35 59" />
                    </svg>
                </button>
                <button type="button" className="h-[132px] w-3/5 rounded-[40px] border-2 border-[#aaa] bg-[#fdfdfd] text-[53px] font-medium text-[#444]">
                    СКОРОСТЬ
                </button>
                <button type="button" aria-label="Следующий" className="text-[#8e8e8e]">
                    <svg viewBox="0 0 40 62" className="h-[62px] w-10" fill="none" stroke="currentColor" strokeWidth="10">
                        <path d="M5 3L33 31L5 59" />
                    </svg>
                </button>
            </div>
        </div>
    );
}

export default App;
